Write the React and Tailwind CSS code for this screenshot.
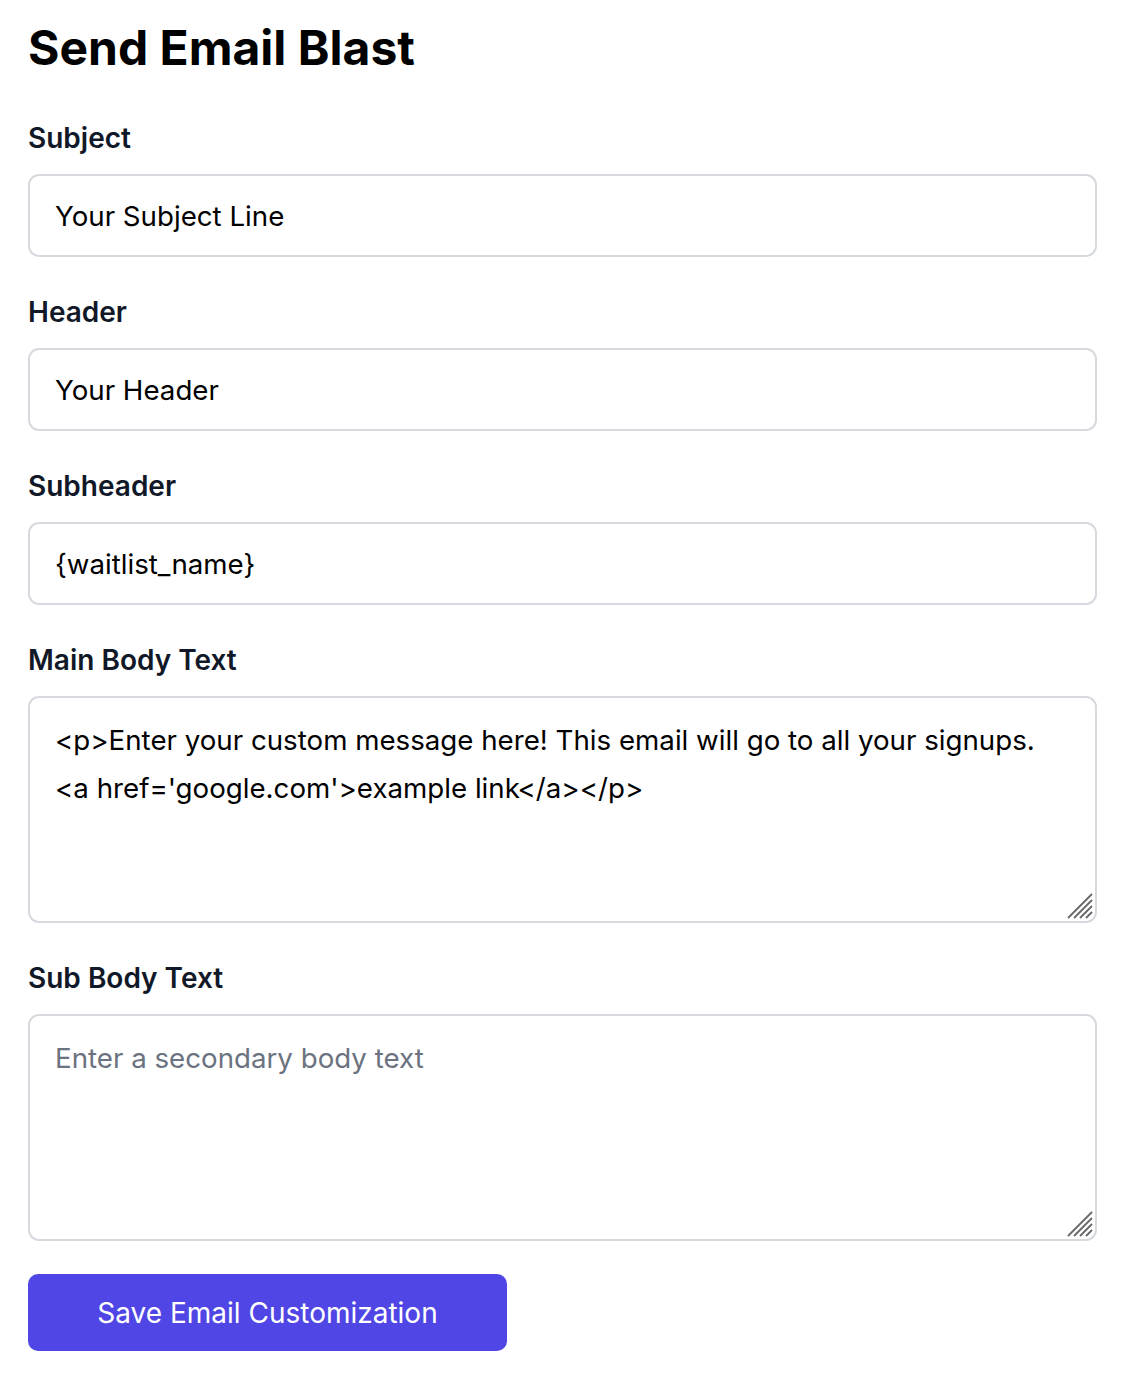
export default function App() {
  const inputCls =
    "block w-full rounded-[11px] border-2 border-[#d6d9de] bg-white px-[25px] pt-[20px] pb-[18px] text-[27.7px] leading-[41px] text-black placeholder:text-[#6b7280] outline-none";
  const areaCls =
    "block w-full h-[227px] resize-none rounded-[11px] border-2 border-[#d6d9de] bg-white px-[25px] py-[18px] text-[27.7px] leading-[48px] text-black placeholder:text-[#6b7280] outline-none";
  const labelCls = "block mb-[16px] text-[28px] leading-[40px] font-semibold text-[#111827]";

  const ResizeGrip = () => (
    <svg
      className="pointer-events-none absolute bottom-[3px] right-[3px]"
      width="28"
      height="28"
      viewBox="0 0 28 28"
    >
      <g stroke="#666666" strokeWidth="1.8" strokeLinecap="butt">
        <line x1="2" y1="26" x2="26" y2="2" />
        <line x1="8" y1="26" x2="26" y2="8" />
        <line x1="14" y1="26" x2="26" y2="14" />
        <line x1="20" y1="26" x2="26" y2="20" />
      </g>
    </svg>
  );

  return (
    <div
      className="min-h-screen bg-white pl-[28px] pr-[43px] pt-[18px] pb-[32px]"
      style={{ fontFamily: "Inter, 'Noto Sans', sans-serif" }}
    >
      <h1 className="mb-[40px] text-[48px] leading-[60px] font-bold text-black">Send Email Blast</h1>

      <form className="flex flex-col gap-[35px]" onSubmit={(e) => e.preventDefault()}>
        <div>
          <label className={labelCls}>Subject</label>
          <input type="text" className={inputCls} defaultValue="Your Subject Line" />
        </div>
        <div>
          <label className={labelCls}>Header</label>
          <input type="text" className={inputCls} defaultValue="Your Header" />
        </div>
        <div>
          <label className={labelCls}>Subheader</label>
          <input type="text" className={inputCls} defaultValue="{waitlist_name}" />
        </div>
        <div>
          <label className={labelCls}>Main Body Text</label>
          <div className="relative">
            <textarea
              className={areaCls}
              defaultValue={"<p>Enter your custom message here! This email will go to all your signups. <a href='google.com'>example link</a></p>"}
            />
            <ResizeGrip />
          </div>
        </div>
        <div>
          <label className={labelCls}>Sub Body Text</label>
          <div className="relative">
            <textarea className={areaCls} placeholder="Enter a secondary body text" />
            <ResizeGrip />
          </div>
        </div>
        <div className="-mt-[2px]">
          <button
            type="submit"
            className="h-[77px] w-[479px] rounded-[10px] bg-[#4f46e5] text-[28px] font-normal text-white"
          >
            Save Email Customization
          </button>
        </div>
      </form>
    </div>
  );
}
